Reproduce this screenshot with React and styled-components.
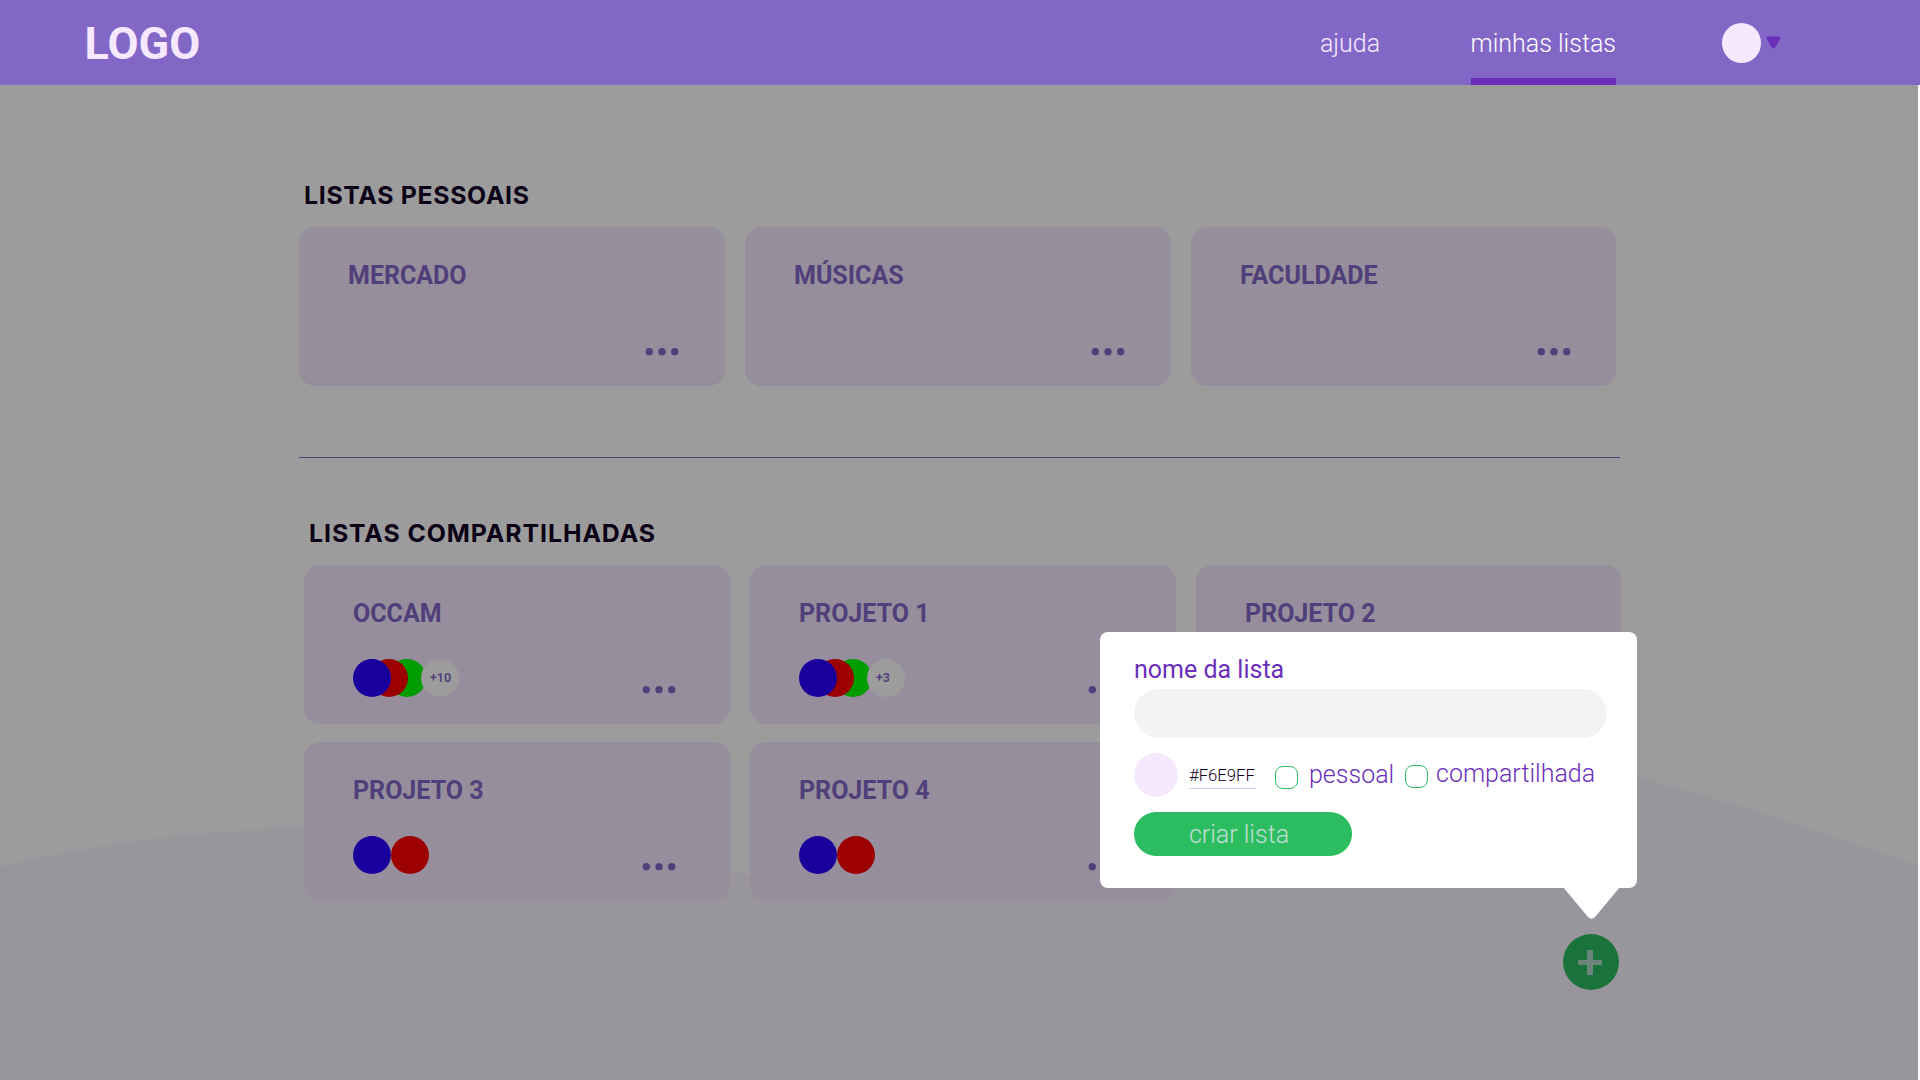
import React from 'react';
import styled, { createGlobalStyle } from 'styled-components';

const GlobalStyle = createGlobalStyle`
  * { box-sizing: border-box; }
  body { margin: 0; background: #fff; font-family: Roboto, "Liberation Sans", sans-serif; overflow: hidden; }
  h1, h2, h3 { margin: 0; }
  button, input { font: inherit; border: 0; padding: 0; }
`;

const Page = styled.div`
  position: relative;
  display: flex;
  flex-direction: column;
  width: 1920px;
  height: 1080px;
  overflow: hidden;
  background: #fff;
`;

const Header = styled.header`
  display: flex;
  align-items: center;
  height: 85px;
  flex: none;
  padding: 0 139px 0 84.5px;
  background: #8367c7;
`;

const Logo = styled.h1`
  margin-right: auto;
  font-size: 45px;
  font-weight: 700;
  line-height: 53px;
  padding-top: 2px;
  color: #f6e9ff;
`;

const Nav = styled.nav`
  display: flex;
  align-self: stretch;
  gap: 90.5px;
`;

const NavLink = styled.a`
  display: flex;
  align-items: center;
  padding-top: ${(p) => (p.$active ? 8 : 1)}px;
  border-bottom: ${(p) => (p.$active ? '7px solid #6b2fbb' : '0')};
  color: ${(p) => (p.$active ? '#fff' : '#f6e9ff')};
  font-size: 25px;
  font-weight: 300;
`;

const Account = styled.div`
  display: flex;
  align-items: center;
  gap: 5px;
  margin-left: 106px;
`;

const Avatar = styled.span`
  width: 39px;
  height: 40px;
  border-radius: 50%;
  background: #f6e9ff;
`;

const Main = styled.main`
  position: relative;
  flex: 1;
  width: 1918px;
  padding: 96px 0 0 299px;
`;

const Wave = styled.svg`
  position: absolute;
  left: 0;
  top: 0;
`;

const Section = styled.section`
  position: relative;
  margin-left: ${(p) => p.$indent || 0}px;
`;

const SectionTitle = styled.h2`
  padding-left: 5px;
  height: 46px;
  line-height: 28px;
  font-family: Inter, "Liberation Sans", sans-serif;
  font-size: 24.8px;
  font-weight: 700;
  letter-spacing: ${(p) => p.$tracking}px;
  color: #0f0024;
`;

const Cards = styled.div`
  display: grid;
  grid-template-columns: repeat(3, 426px);
  gap: 18px 20px;
  width: 1317px;
  overflow: hidden;
`;

const Card = styled.article`
  display: flex;
  flex-direction: column;
  justify-content: space-between;
  height: 159px;
  padding: 34px ${(p) => (p.$shared ? 54 : 46)}px 27px 49px;
  border-radius: 16px;
  background: #f6e9ff;
`;

const CardTitle = styled.h3`
  font-size: 25px;
  font-weight: 700;
  line-height: 30px;
  color: #8367c7;
`;

const CardFooter = styled.div`
  display: flex;
  align-items: flex-end;
  justify-content: space-between;
  height: 38px;
`;

const People = styled.div`
  display: flex;
  isolation: isolate;
`;

const Person = styled.span`
  position: relative;
  z-index: ${(p) => p.$z};
  width: 38px;
  height: 38px;
  margin-left: ${(p) => p.$shift || 0}px;
  border-radius: 50%;
  background: ${(p) => p.$color};
`;

const More = styled(Person)`
  display: flex;
  align-items: center;
  padding: 0 0 1px 9px;
  font-size: 12.5px;
  font-weight: 600;
  color: #8367c7;
`;

const Dots = styled.svg`
  display: block;
  margin: 0 0 3px auto;
  fill: #8367c7;
`;

const Divider = styled.hr`
  position: relative;
  width: 1321px;
  height: 1px;
  margin: 71px 0 61px;
  border: 0;
  background: #8367c7;
`;

const AddButton = styled.button`
  position: absolute;
  left: 1563px;
  top: 849px;
  width: 56px;
  height: 56px;
  border-radius: 50%;
  background: #2bbd5f;
`;

const Scrim = styled.div`
  position: absolute;
  inset: 0;
  background: rgba(0, 0, 0, 0.39);
`;

const Popover = styled.form`
  position: absolute;
  left: 1100px;
  top: 632px;
  width: 537px;
  height: 256px;
  padding: 22px 30px 0 34px;
  border-radius: 8px;
  background: #fff;
`;

const Tail = styled.svg`
  position: absolute;
  left: 463px;
  top: 255px;
`;

const Label = styled.label`
  display: block;
  height: 35px;
  padding-top: 1px;
  line-height: 30px;
  font-size: 25px;
  color: #6b2fbb;
`;

const NameInput = styled.input`
  display: block;
  width: 473px;
  height: 49px;
  border-radius: 25px;
  background: #f3f3f3;
`;

const Options = styled.div`
  display: flex;
  align-items: center;
  height: 44px;
  margin: 15px 0;
`;

const Swatch = styled.span`
  width: 44px;
  height: 44px;
  border-radius: 50%;
  background: #f6e9ff;
`;

const Hex = styled.span`
  width: 67px;
  height: 27px;
  margin: 0 19px 0 11px;
  padding-top: 4px;
  line-height: 20px;
  border-bottom: 1px solid #d9cff5;
  font-size: 16.7px;
  font-weight: 300;
  color: #0f0024;
`;

const Check = styled.span`
  width: 23px;
  height: 23px;
  margin-top: ${(p) => p.$top}px;
  border: 1px solid #2bbd5f;
  border-radius: 8px;
`;

const OptionText = styled.span`
  width: ${(p) => p.$width}px;
  margin: ${(p) => p.$top}px 0 0 ${(p) => p.$left}px;
  font-size: 25px;
  font-weight: 300;
  white-space: nowrap;
  color: #6b2fbb;
`;

const Submit = styled.button`
  display: block;
  width: 218px;
  height: 44px;
  padding: 0 8px 0 0;
  border-radius: 22px;
  background: #2bbd5f;
  color: rgba(246, 233, 255, 0.75);
  font-size: 25px;
  font-weight: 300;
`;

const BLUE = '#2a00ff';
const RED = '#ff0000';
const GREEN = '#00ff00';

const personal = ['MERCADO', 'MÚSICAS', 'FACULDADE'];
const shared = [
  { title: 'OCCAM', more: '+10' },
  { title: 'PROJETO 1', more: '+3' },
  { title: 'PROJETO 2', more: '+3' },
  { title: 'PROJETO 3' },
  { title: 'PROJETO 4' },
];

function ListCard({ title, isShared, more }) {
  return (
    <Card $shared={isShared}>
      <CardTitle>{title}</CardTitle>
      <CardFooter>
        {isShared && (
          <People>
            <Person $color={BLUE} $z={3} />
            <Person $color={RED} $z={2} $shift={more ? -21 : 0} />
            {more && <Person $color={GREEN} $z={1} $shift={-20} />}
            {more && <More $color="#fff" $z={4} $shift={-5}>{more}</More>}
          </People>
        )}
        <Dots width="34" height="9" viewBox="0 0 34 9">
          <circle cx="4.3" cy="4.7" r="3.65" />
          <circle cx="17" cy="4.7" r="3.65" />
          <circle cx="29.7" cy="4.7" r="3.65" />
        </Dots>
      </CardFooter>
    </Card>
  );
}

export default function App() {
  return (
    <Page>
      <GlobalStyle />
      <Header>
        <Logo>LOGO</Logo>
        <Nav>
          <NavLink>ajuda</NavLink>
          <NavLink $active>minhas listas</NavLink>
        </Nav>
        <Account>
          <Avatar />
          <svg width="15" height="13" viewBox="0 0 15 13">
            <path d="M2.2 2.2H12.8L7.5 10.8Z" fill="#6b2fbb" stroke="#6b2fbb" strokeWidth="3.2" strokeLinejoin="round" />
          </svg>
        </Account>
      </Header>
      <Main>
        <Wave width="1920" height="995" viewBox="0 85 1920 995">
          <path
            d="M0 866C115 840 230 827 340 827C480 827 610 848 740 872.5C860 895 960 880 1060 830C1200 760 1330 720 1450 735C1530 745 1590 761 1637 776.5C1740 805 1830 835 1920 865.5V1080H0Z"
            fill="#faf4ff"
          />
        </Wave>
        <Section>
          <SectionTitle $tracking={0.7}>LISTAS PESSOAIS</SectionTitle>
          <Cards>
            {personal.map((title) => <ListCard key={title} title={title} />)}
          </Cards>
        </Section>
        <Divider />
        <Section $indent={5}>
          <SectionTitle $tracking={0.95}>LISTAS COMPARTILHADAS</SectionTitle>
          <Cards>
            {shared.map((c) => <ListCard key={c.title} isShared {...c} />)}
          </Cards>
        </Section>
        <AddButton type="button" aria-label="nova lista">
          <svg width="56" height="56" viewBox="0 0 56 56" display="block">
            <path d="M24 16H30V26H39V31H30V41H24V31H15V26H24Z" fill="#f6e9ff" fillOpacity=".65" />
          </svg>
        </AddButton>
        <Scrim />
      </Main>
      <Popover>
        <Label>nome da lista</Label>
        <NameInput />
        <Options>
          <Swatch />
          <Hex>#F6E9FF</Hex>
          <Check $top={5} />
          <OptionText $left={11} $top={-1} $width={96}>pessoal</OptionText>
          <Check $top={3} />
          <OptionText $left={8} $top={-3} $width={160}>compartilhada</OptionText>
        </Options>
        <Submit type="button">criar lista</Submit>
        <Tail width="58" height="33" viewBox="0 0 58 33">
          <path d="M0 0H57L32 30Q28.5 33.6 25 30Z" fill="#fff" />
        </Tail>
      </Popover>
    </Page>
  );
}
